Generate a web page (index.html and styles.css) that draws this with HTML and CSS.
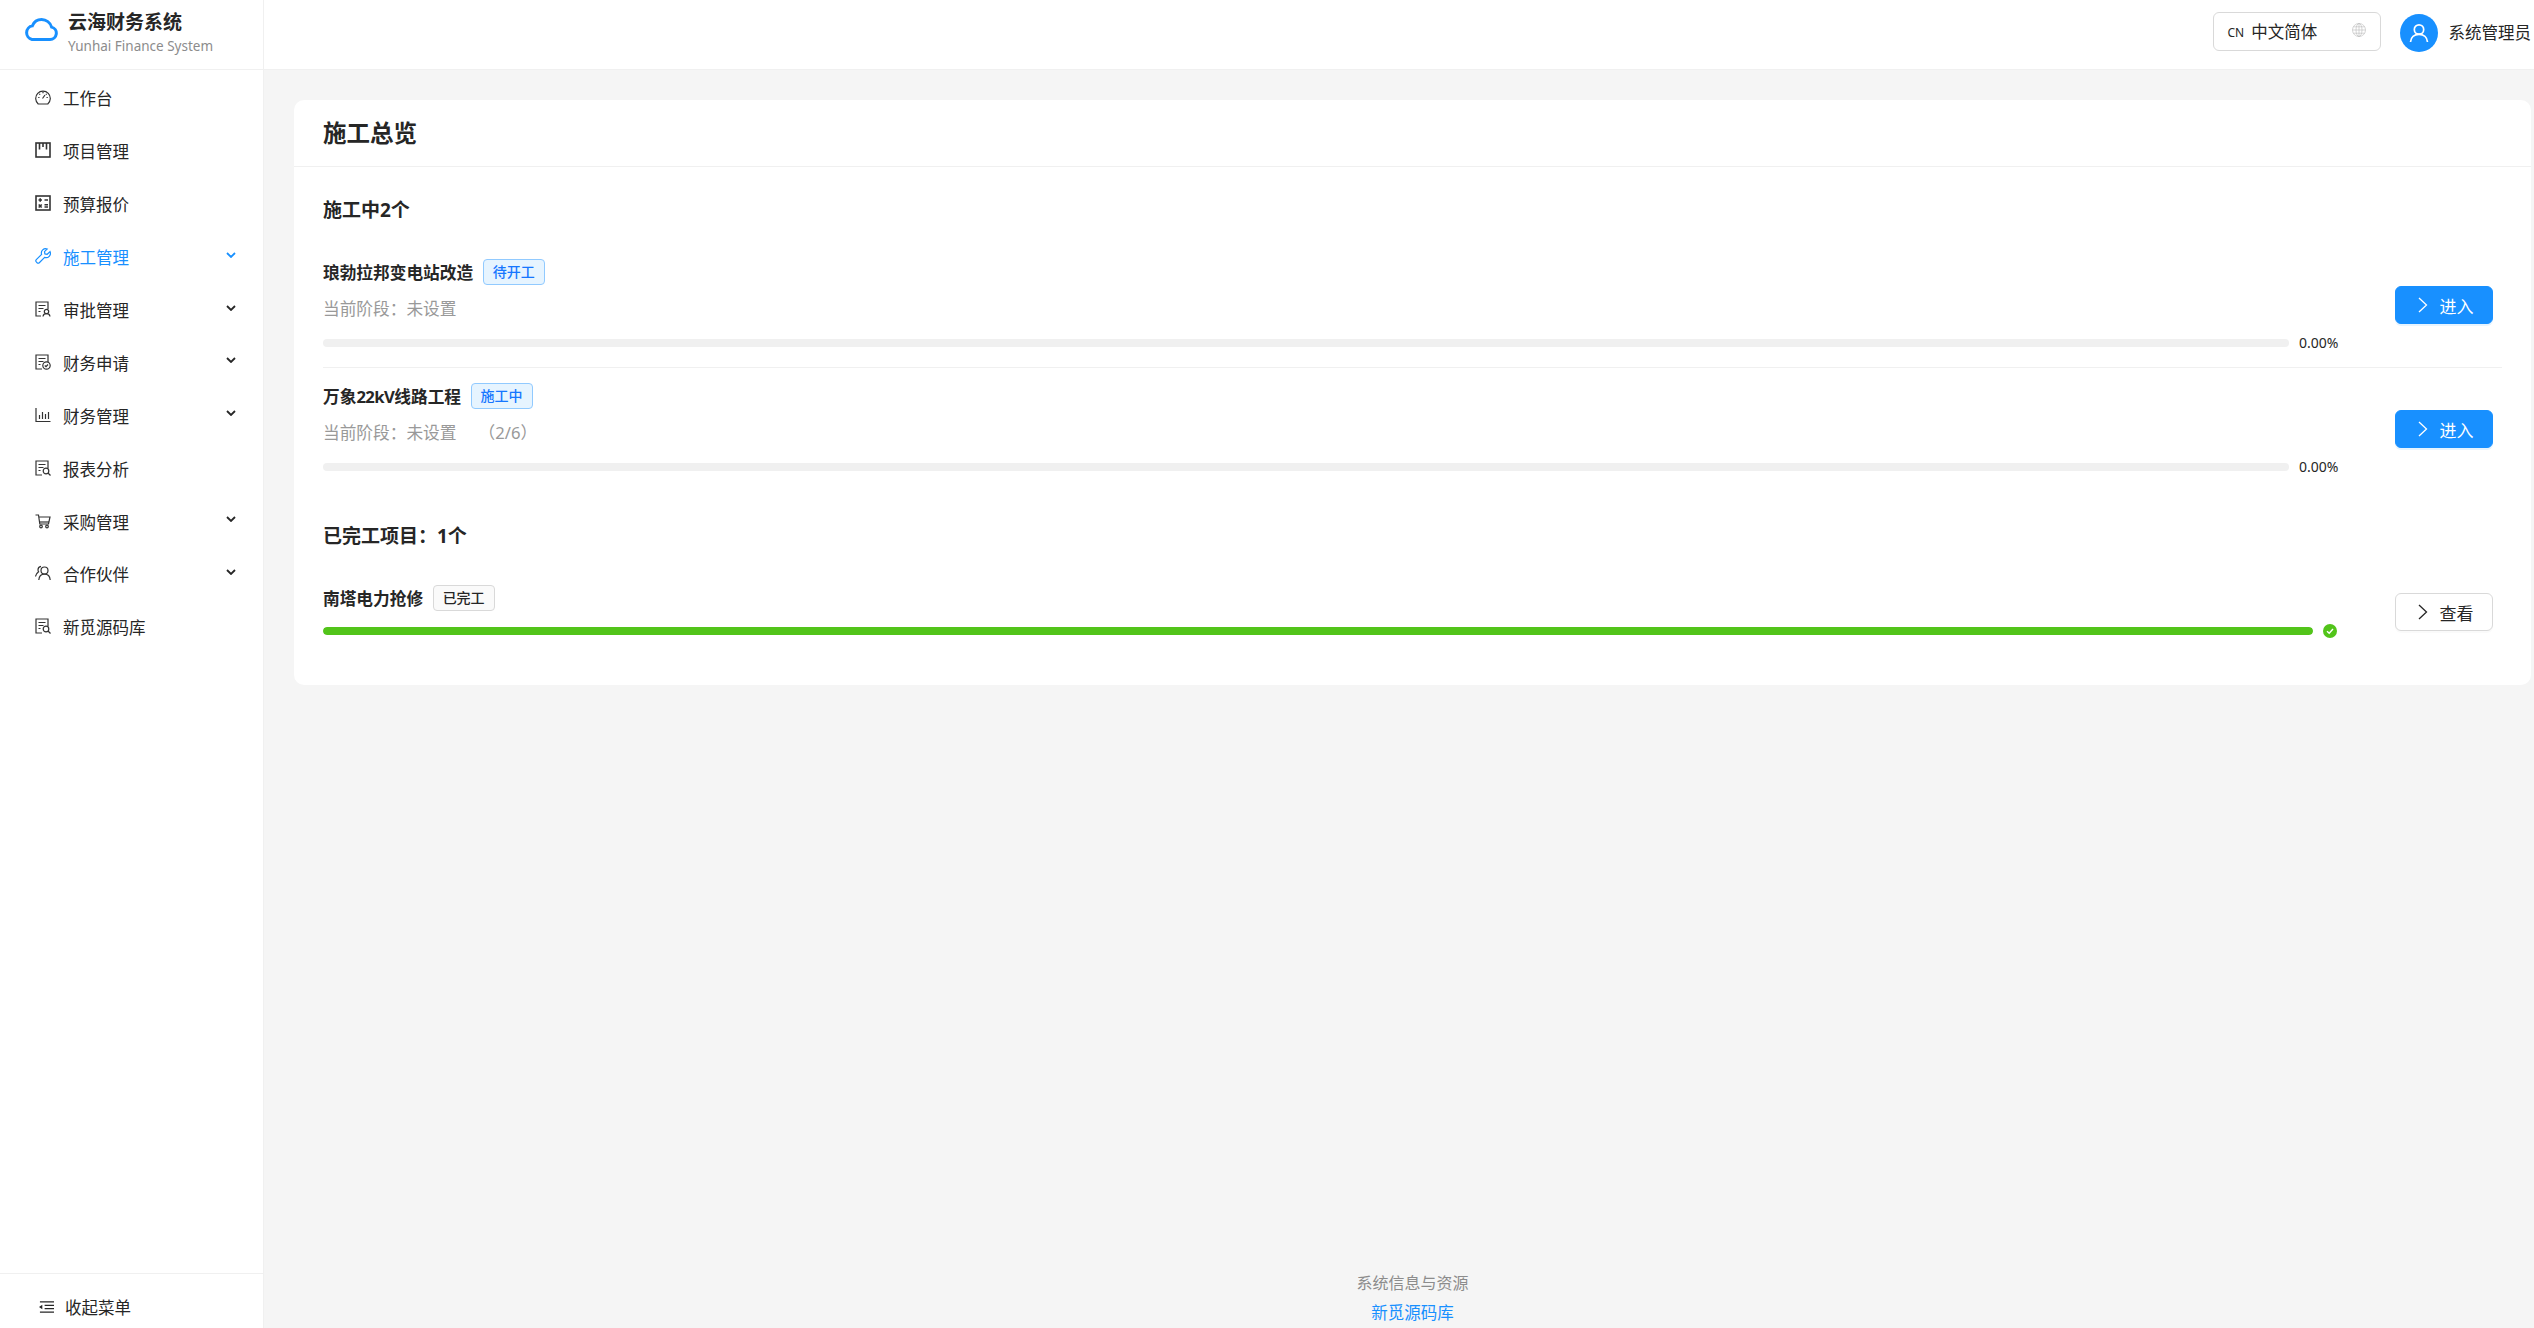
FILE: index.html
```html
<!DOCTYPE html>
<html lang="zh-CN">
<head>
    <meta charset="UTF-8">
    <meta name="viewport" content="width=device-width, initial-scale=1.0">
    <title>云海财务系统</title>
    <link rel="stylesheet" href="styles.css">
</head>
<body>
    <div class="app">
        <aside class="sidebar">
            <div class="logo">
                <svg class="logo-icon" viewBox="0 0 34 23" fill="none" stroke="#1890ff" stroke-width="3">
                    <path d="M8 21.500h18a6.300 6.300 0 0 0 1.600-12.400A10.600 10.600 0 0 0 17.600 1.600a10 10 0 0 0-9.200 6.200A7 7 0 0 0 8 21.500z"/>
                </svg>
                <div>
                    <div class="logo-title">云海财务系统</div>
                    <div class="logo-sub">Yunhai Finance System</div>
                </div>
            </div>
            <nav class="menu">
                <a class="menu-item">
                    <svg class="menu-icon" viewBox="0 0 16 16"><path d="M3.200 15a7.300 7.300 0 1 1 9.600 0z"/><path d="M3.200 8.500h1.300M11.500 8.500h1.300M8 3v1.300M4.300 4.800l.9.900M11.700 4.800l-.9.900M7.500 9.500l2.500-3.500"/></svg>
                    <span>工作台</span>
                </a>
                <a class="menu-item">
                    <svg class="menu-icon menu-icon-bold" viewBox="0 0 16 16"><rect x="1" y="1" width="14" height="14"/><path d="M4.500 1v6.500M8 1v4M11.500 1v6.500"/></svg>
                    <span>项目管理</span>
                </a>
                <a class="menu-item">
                    <svg class="menu-icon menu-icon-bold" viewBox="0 0 16 16"><rect x="1" y="1" width="14" height="14"/><path d="M3.500 5h3.500M5.200 3.300v3.400M9.500 5h3.500M9.500 9.700h3.500M9.500 12h3.500M3.700 9.500l3 3M6.700 9.500l-3 3"/></svg>
                    <span>预算报价</span>
                </a>
                <a class="menu-item menu-item-active">
                    <svg class="menu-icon" viewBox="0 0 16 16"><path d="M15 3.600l-2.800 2.700-2.300-.4-.4-2.200L12.200 1a4.300 4.300 0 0 0-5.600 5.400L1.300 11.700a1.600 1.600 0 0 0 0 2.200l.8.800a1.600 1.600 0 0 0 2.200 0l5.300-5.300A4.300 4.300 0 0 0 15 3.600z"/></svg>
                    <span>施工管理</span>
                    <svg class="chevron" viewBox="0 0 10 6"><path d="M1 1l4 4 4-4"/></svg>
                </a>
                <a class="menu-item">
                    <svg class="menu-icon" viewBox="0 0 16 16"><path d="M6 15H1V1h12v7M3.500 4.500h7M3.500 7.500h5M3.500 10.500h2"/><circle cx="11.500" cy="10.500" r="2.200"/><path d="M8 15.500c.3-2 1.600-2.800 3.500-2.800s3.200.8 3.500 2.800"/></svg>
                    <span>审批管理</span>
                    <svg class="chevron" viewBox="0 0 10 6"><path d="M1 1l4 4 4-4"/></svg>
                </a>
                <a class="menu-item">
                    <svg class="menu-icon" viewBox="0 0 16 16"><path d="M7 15H1V1h12v7M3.500 4.500h7M3.500 7.500h5M3.500 10.500h2"/><circle cx="11.500" cy="11.500" r="3.700"/><path d="M9.800 11.500l1.200 1.200 2-2.200"/></svg>
                    <span>财务申请</span>
                    <svg class="chevron" viewBox="0 0 10 6"><path d="M1 1l4 4 4-4"/></svg>
                </a>
                <a class="menu-item">
                    <svg class="menu-icon" viewBox="0 0 16 16"><path d="M1 1v13.500h14.500M4.500 12V8M7.500 12V5M10.500 12V7M13.500 12V5"/></svg>
                    <span>财务管理</span>
                    <svg class="chevron" viewBox="0 0 10 6"><path d="M1 1l4 4 4-4"/></svg>
                </a>
                <a class="menu-item">
                    <svg class="menu-icon" viewBox="0 0 16 16"><path d="M7 15H1V1h12v7M3.500 4.500h7M3.500 7.500h5M3.500 10.500h2"/><circle cx="11" cy="11" r="2.800"/><path d="M13 13l2.500 2.500"/></svg>
                    <span>报表分析</span>
                </a>
                <a class="menu-item">
                    <svg class="menu-icon" viewBox="0 0 16 16"><path d="M.5 2h3l1.300 9h8.700l1.500-7H4"/><path d="M5 9h9"/><circle cx="6" cy="13.500" r="1.300"/><circle cx="12" cy="13.500" r="1.300"/></svg>
                    <span>采购管理</span>
                    <svg class="chevron" viewBox="0 0 10 6"><path d="M1 1l4 4 4-4"/></svg>
                </a>
                <a class="menu-item">
                    <svg class="menu-icon" viewBox="0 0 16 16"><circle cx="9.500" cy="5.500" r="3.500"/><path d="M3.800 15c.3-3.500 2.500-5.800 5.700-5.800s5.400 2.300 5.700 5.800M6 1.300A3.500 3.500 0 0 0 3 4.800c0 .8.200 1.400.6 2C1.800 8 .8 9.500.5 11.500"/></svg>
                    <span>合作伙伴</span>
                    <svg class="chevron" viewBox="0 0 10 6"><path d="M1 1l4 4 4-4"/></svg>
                </a>
                <a class="menu-item">
                    <svg class="menu-icon" viewBox="0 0 16 16"><path d="M7 15H1V1h12v7M3.500 4.500h7M3.500 7.500h5M3.500 10.500h2"/><circle cx="11" cy="11" r="2.800"/><path d="M13 13l2.500 2.500"/></svg>
                    <span>新觅源码库</span>
                </a>
            </nav>
            <div class="collapse">
                <svg class="collapse-icon" viewBox="0 0 16 14"><path d="M1 1.500h15M6 5.200h10M6 8.800h10M1 12.500h15"/><path class="collapse-arrow" d="M0 7l3.500-2.500v5z"/></svg>
                <span>收起菜单</span>
            </div>
        </aside>

        <div class="main">
            <header class="topbar">
                <div class="lang">
                    <span class="lang-code">CN</span>
                    <span class="lang-name">中文简体</span>
                    <svg class="lang-globe" viewBox="0 0 14 14"><circle cx="7" cy="7" r="6.500"/><ellipse cx="7" cy="7" rx="3" ry="6.500"/><path d="M.5 7h13M1.300 3.800h11.400M1.300 10.200h11.400M7 .5v13"/></svg>
                </div>
                <div class="user">
                    <span class="avatar">
                        <svg viewBox="0 0 20 20"><circle cx="10" cy="6.500" r="4.700"/><path d="M1.500 19c.3-4.700 3.800-7.700 8.500-7.700s8.200 3 8.500 7.700"/></svg>
                    </span>
                    <span class="user-name">系统管理员</span>
                </div>
            </header>

            <div class="content">
                <section class="card">
                    <h1 class="card-title">施工总览</h1>
                    <div class="card-body">
                        <h2 class="section-title">施工中2个</h2>
                        <div class="project project-line">
                            <div class="project-info">
                                <div class="project-head">
                                    <span class="project-name">琅勃拉邦变电站改造</span>
                                    <span class="tag tag-blue">待开工</span>
                                </div>
                                <div class="project-stage">当前阶段：未设置</div>
                                <div class="progress">
                                    <div class="progress-track"></div>
                                    <span class="progress-text">0.00%</span>
                                </div>
                            </div>
                            <button class="btn btn-primary">
                                <svg class="btn-icon" viewBox="0 0 10 16"><path d="M1 1l7.500 7L1 15"/></svg>进入
                            </button>
                        </div>
                        <div class="project">
                            <div class="project-info">
                                <div class="project-head">
                                    <span class="project-name">万象<span class="name-latin">22kV</span>线路工程</span>
                                    <span class="tag tag-blue">施工中</span>
                                </div>
                                <div class="project-stage">当前阶段：未设置<span class="stage-count">（2/6）</span></div>
                                <div class="progress">
                                    <div class="progress-track"></div>
                                    <span class="progress-text">0.00%</span>
                                </div>
                            </div>
                            <button class="btn btn-primary">
                                <svg class="btn-icon" viewBox="0 0 10 16"><path d="M1 1l7.500 7L1 15"/></svg>进入
                            </button>
                        </div>

                        <h2 class="section-title section-done">已完工项目：1个</h2>
                        <div class="project">
                            <div class="project-info">
                                <div class="project-head">
                                    <span class="project-name">南塔电力抢修</span>
                                    <span class="tag tag-gray">已完工</span>
                                </div>
                                <div class="progress progress-done">
                                    <div class="progress-track"><div class="progress-fill" style="width: 100%"></div></div>
                                    <svg class="progress-check" viewBox="0 0 14 14"><circle cx="7" cy="7" r="7"/><path d="M4 7.200l2.200 2.100L10 5"/></svg>
                                </div>
                            </div>
                            <button class="btn">
                                <svg class="btn-icon" viewBox="0 0 10 16"><path d="M1 1l7.500 7L1 15"/></svg>查看
                            </button>
                        </div>
                    </div>
                </section>

                <footer class="footer">
                    <div>系统信息与资源</div>
                    <a class="footer-link">新觅源码库</a>
                </footer>
            </div>
        </div>
    </div>
</body>
</html>
```

FILE: styles.css
```css
* { box-sizing: border-box; }
html, body { margin: 0; height: 100%; overflow: hidden; }
body { font-family: "Noto Sans", "Noto Sans CJK SC", sans-serif; font-size: 16.5px; color: #262626; background: #f5f5f5; }

.app { display: flex; height: 100vh; }

/* sidebar */
.sidebar { width: 264px; flex-shrink: 0; display: flex; flex-direction: column; background: #fff; border-right: 1px solid #f0f0f0; }
.logo { height: 70px; flex-shrink: 0; display: flex; align-items: center; gap: 10px; padding: 0 0 5px 24px; border-bottom: 1px solid #f0f0f0; }
.logo-icon { width: 34px; height: 23px; margin-top: -5px; }
.logo-title { font-size: 19px; font-weight: 700; line-height: 26px; }
.logo-sub { font-size: 13.5px; line-height: 20px; margin-top: 1px; color: #8c8c8c; }
.menu { flex: 1; padding-top: 2px; }
.menu-item { height: 52.9px; display: flex; align-items: center; padding: 0 27px 0 35px; }
.menu-item span { flex: 1; margin-left: 12px; }
.menu-icon { width: 16px; height: 16px; margin-top: -2px; fill: none; stroke: #333; stroke-width: 1.2; }
.menu-icon-bold { stroke-width: 1.6; }
.chevron { width: 10px; height: 6px; margin-top: -5px; fill: none; stroke: #262626; stroke-width: 1.8; }
.menu-item-active { color: #1890ff; }
.menu-item-active .menu-icon, .menu-item-active .chevron { stroke: #1890ff; }
.collapse { height: 55px; flex-shrink: 0; display: flex; align-items: center; gap: 11px; padding: 12px 0 0 39px; border-top: 1px solid #f0f0f0; }
.collapse-icon { width: 15px; height: 14px; fill: none; stroke: #262626; stroke-width: 1.3; }
.collapse-arrow { fill: #262626; stroke: none; }

/* top bar */
.main { flex: 1; min-width: 0; display: flex; flex-direction: column; }
.topbar { height: 70px; flex-shrink: 0; display: flex; justify-content: flex-end; align-items: center; padding: 0 3px 4px 0; background: #fff; border-bottom: 1px solid #f0f0f0; }
.lang { width: 168px; height: 39px; display: flex; align-items: center; padding: 0 14px; border: 1px solid #d9d9d9; border-radius: 6px; margin-top: -3px; }
.lang-code { font-size: 12px; margin-right: 7px; margin-top: 2px; }
.lang-name { flex: 1; font-size: 16.5px; }
.lang-globe { width: 14px; height: 14px; fill: none; stroke: #bbb; stroke-width: .6; margin-top: -3px; }
.user { display: flex; align-items: center; gap: 11px; margin-left: 19px; }
.avatar { width: 38px; height: 38px; border-radius: 50%; background: #1890ff; display: flex; align-items: center; justify-content: center; }
.avatar svg { width: 20px; height: 20px; fill: none; stroke: #fff; stroke-width: 1.7; }
.user-name { white-space: nowrap; margin-top: -2px; }

/* content */
.content { flex: 1; min-height: 0; display: flex; flex-direction: column; justify-content: space-between; padding: 30px 3px 0 30px; }
.card { background: #fff; border-radius: 10px; }
.card-title { margin: 0; height: 67px; line-height: 66px; padding-left: 29px; font-size: 23.5px; font-weight: 700; border-bottom: 1px solid #f0f0f0; }
.card-body { padding: 29px 29px 31px; }
.section-title { margin: 0 0 20px; font-size: 19px; font-weight: 700; line-height: 28px; }
.section-done { margin-top: 32px; }

.project { display: flex; align-items: center; padding: 15px 9px 12px 0; }
.project-line { padding-bottom: 13px; border-bottom: 1px solid #f0f0f0; }
.project-info { flex: 1; min-width: 0; margin-right: 58px; }
.project-head { display: flex; align-items: center; gap: 9.5px; height: 26px; }
.project-name { font-size: 16.7px; font-weight: 700; }
.name-latin { letter-spacing: -.6px; }
.project-stage { margin-top: 12px; line-height: 24px; font-size: 16.7px; color: #999; }
.stage-count { margin-left: 22px; }
.tag { height: 26px; line-height: 24px; padding: 0 9px; font-size: 14px; font-weight: 500; border: 1px solid; border-radius: 4px; }
.tag-blue { color: #1677ff; background: #e6f4ff; border-color: #91caff; }
.tag-gray { color: #262626; background: #fafafa; border-color: #d9d9d9; }

.progress { display: flex; align-items: center; height: 22px; margin-top: 11px; gap: 10px; }
.progress-done { margin-top: 9px; }
.progress-track { flex: 1; height: 8px; border-radius: 4px; background: #f0f0f0; overflow: hidden; }
.progress-fill { height: 100%; border-radius: 4px; background: #52c41a; }
.progress-text { width: 38px; font-size: 14px; white-space: nowrap; margin-top: -2px; }
.progress-check { width: 14px; height: 14px; }
.progress-check circle { fill: #52c41a; }
.progress-check path { fill: none; stroke: #fff; stroke-width: 1.4; }

.btn { width: 98px; height: 38px; flex-shrink: 0; display: flex; align-items: center; justify-content: center; gap: 12px; margin-bottom: 3px; padding: 0 0 0 3px; font: inherit; font-size: 17px; color: #262626; background: #fff; border: 1px solid #d9d9d9; border-radius: 6px; box-shadow: 0 2px 0 rgba(0, 0, 0, .02); }
.btn-primary { color: #fff; background: #1890ff; border-color: #1890ff; box-shadow: 0 2px 0 rgba(5, 145, 255, .1); }
.btn-icon { width: 10px; height: 16px; fill: none; stroke: currentColor; stroke-width: 1.3; }

.footer { text-align: center; line-height: 29px; font-size: 16px; color: #8c8c8c; }
.footer-link { color: #1890ff; font-size: 16.5px; }
```
